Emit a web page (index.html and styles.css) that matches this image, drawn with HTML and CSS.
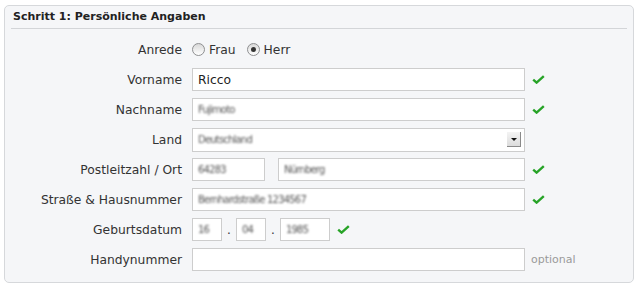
FILE: index.html
```html
<!DOCTYPE html>
<html>
<head>
  <title>Schritt 1: Persönliche Angaben</title>
  <link rel="stylesheet" href="styles.css">
</head>
<body>
  <div class="panel">
    <div class="panel-head">Schritt 1: Persönliche Angaben</div>
    <div class="form">
      <div class="row">
        <span class="label">Anrede</span>
        <div class="radios">
          <span class="radio"></span><span class="radio-text">Frau</span>
          <span class="radio checked"></span><span class="radio-text">Herr</span>
        </div>
      </div>

      <div class="row">
        <span class="label">Vorname</span>
        <div class="field wide"><span class="value">Ricco</span></div>
        <span class="check"></span>
      </div>

      <div class="row">
        <span class="label">Nachname</span>
        <div class="field wide"><span class="blur">Fujimoto</span></div>
        <span class="check"></span>
      </div>

      <div class="row">
        <span class="label">Land</span>
        <div class="field wide select">
          <span class="blur">Deutschland</span>
          <span class="drop"></span>
        </div>
      </div>

      <div class="row">
        <span class="label">Postleitzahl / Ort</span>
        <div class="field plz"><span class="blur">64283</span></div>
        <div class="field ort"><span class="blur">Nürnberg</span></div>
        <span class="check"></span>
      </div>

      <div class="row">
        <span class="label">Straße &amp; Hausnummer</span>
        <div class="field wide"><span class="blur">Bernhardstraße 1234567</span></div>
        <span class="check"></span>
      </div>

      <div class="row">
        <span class="label">Geburtsdatum</span>
        <div class="field day"><span class="blur">16</span></div>
        <span class="dot">.</span>
        <div class="field day"><span class="blur">04</span></div>
        <span class="dot">.</span>
        <div class="field year"><span class="blur">1985</span></div>
        <span class="check"></span>
      </div>

      <div class="row">
        <span class="label">Handynummer</span>
        <div class="field wide"></div>
        <span class="hint">optional</span>
      </div>
    </div>
  </div>
</body>
</html>
```

FILE: styles.css
```css
body {
  margin: 0;
  background-color: #ffffff;
  font-family: "DejaVu Sans", Verdana, sans-serif;
  color: #333333;
}

.panel {
  width: 628px;
  height: 276px;
  margin: 5px 0 0 4px;
  border: 1px solid #d6d8db;
  border-radius: 5px;
  background-color: #f5f6f8;
}

.panel-head {
  height: 22px;
  line-height: 22px;
  margin: 0 6px;
  padding-left: 2px;
  border-bottom: 1px solid #d3d5d8;
  font-size: 11px;
  font-weight: bold;
  color: #222222;
}

.form {
  padding-top: 9px;
  display: flex;
  flex-direction: column;
  gap: 7px;
}

.row {
  display: flex;
  align-items: center;
  height: 23px;
}

.label {
  width: 177px;
  margin-right: 10px;
  text-align: right;
  font-size: 12.3px;
  color: #333333;
}

.radios {
  display: flex;
  align-items: center;
  font-size: 12.3px;
}

.radio {
  width: 11px;
  height: 11px;
  border: 1px solid #8e8f91;
  border-radius: 50%;
  background: linear-gradient(#d9d9d9, #ffffff);
  position: relative;
  margin-right: 4px;
}

.radio.checked::after {
  content: "";
  position: absolute;
  left: 3px;
  top: 3px;
  width: 5px;
  height: 5px;
  border-radius: 50%;
  background-color: #333333;
}

.radio-text {
  margin-right: 11px;
}

.field {
  box-sizing: border-box;
  height: 23px;
  border: 1px solid #cdcdcd;
  background-color: #ffffff;
  display: flex;
  align-items: center;
  padding-left: 5px;
  font-size: 12.3px;
  overflow: hidden;
  position: relative;
}

.wide {
  width: 333px;
}

.plz {
  width: 73px;
  margin-right: 13px;
}

.ort {
  width: 247px;
}

.day {
  width: 30px;
}

.year {
  width: 50px;
}

.dot {
  width: 14px;
  text-align: center;
  font-size: 12px;
}

.value {
  color: #222222;
}

.blur {
  display: inline-block;
  color: #555555;
  font-size: 10px;
  filter: blur(0.8px);
  letter-spacing: -0.8px;
}

.select {
  height: 24px;
}

.drop {
  position: absolute;
  right: 3px;
  top: 3px;
  width: 13px;
  height: 14px;
  border-right: 1px solid #8a8a8a;
  border-bottom: 1px solid #8a8a8a;
  background: linear-gradient(#f4f4f4, #dcdcdc);
}

.drop::after {
  content: "";
  position: absolute;
  left: 4px;
  top: 6px;
  border-left: 3px solid transparent;
  border-right: 3px solid transparent;
  border-top: 3px solid #111111;
}

.check {
  width: 13px;
  height: 9px;
  margin-left: 7px;
  background: url("data:image/svg+xml,%3Csvg xmlns='http://www.w3.org/2000/svg' width='13' height='9' viewBox='0 0 13 9'%3E%3Cpath d='M1.2 4.6 L4.6 7.6 L11.8 1.2' fill='none' stroke='%2327a327' stroke-width='2.4'/%3E%3C/svg%3E") no-repeat;
}

.hint {
  margin-left: 6px;
  font-size: 11px;
  color: #9a9a9a;
}
```
